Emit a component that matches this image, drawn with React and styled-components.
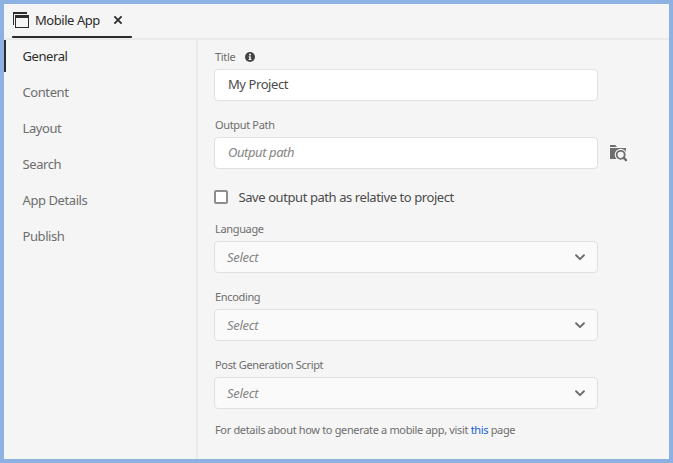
import React from 'react';
import styled, { createGlobalStyle } from 'styled-components';

const GlobalStyle = createGlobalStyle`
  * { box-sizing: border-box; }
  body { margin: 0; }
  button, input { font: inherit; letter-spacing: inherit; }
`;

const Window = styled.div`
  display: flex;
  flex-direction: column;
  width: 673px;
  height: 463px;
  border: 4px solid #8cb1e2;
  background: #f5f5f5;
  font: 13px/18px "Noto Sans", "Open Sans", sans-serif;
  letter-spacing: -0.42px;
  color: #4b4b4b;
  white-space: nowrap;
`;

const TabBar = styled.div`
  flex: none;
  height: 36px;
  padding-left: 8px;
  border-bottom: 2px solid #eaeaea;
`;

const Tab = styled.div`
  display: flex;
  align-items: center;
  width: 120px;
  height: 34px;
  padding: 0 9px 1px 1px;
  border-bottom: 2px solid #2c2c2c;
  border-radius: 1px;
  color: #2c2c2c;
`;

const TabTitle = styled.span`
  margin-left: 6px;
  letter-spacing: -0.45px;
`;

const CloseButton = styled.button`
  display: flex;
  margin-left: auto;
  padding: 0;
  border: 0;
  background: none;
  color: #2c2c2c;
`;

const Body = styled.div`
  display: flex;
  flex: 1;
  min-height: 0;
`;

const Sidebar = styled.nav`
  display: flex;
  flex-direction: column;
  gap: 4px;
  width: 194px;
  border-right: 2px solid #eaeaea;
`;

const NavItem = styled.a`
  height: 32px;
  padding-left: ${p => (p.$active ? 16.5 : 18.5)}px;
  border-left: ${p => (p.$active ? '2px solid #2c2c2c' : '0')};
  line-height: 32px;
  color: ${p => (p.$active ? '#2c2c2c' : '#6e6e6e')};
`;

const Form = styled.form`
  display: flex;
  flex-direction: column;
  padding: 8px 0 0 16px;
`;

const Field = styled.div`
  height: 68px;
`;

const Label = styled.label`
  display: flex;
  align-items: center;
  gap: 10px;
  height: 18px;
  margin-bottom: 3px;
  padding-left: 1px;
  font-size: 11px;
  letter-spacing: -0.34px;
  color: #6e6e6e;
`;

const FieldRow = styled.div`
  display: flex;
  align-items: center;
  gap: 12px;
`;

const TextInput = styled.input`
  width: 384px;
  height: 32px;
  padding: 0 13px 2px;
  border: 1px solid #e0e0e0;
  border-radius: 4px;
  outline: 0;
  background: #fff;
  color: #4b4b4b;
  &::placeholder { color: #858585; font-style: italic; opacity: 1; }
`;

const Picker = styled.button`
  display: flex;
  align-items: center;
  justify-content: space-between;
  width: 384px;
  height: 32px;
  padding: 0 12px;
  border: 1px solid #e0e0e0;
  border-radius: 4px;
  background: #fafafa;
  color: #6e6e6e;
`;

const Placeholder = styled.span`
  font-style: italic;
  letter-spacing: -0.3px;
  color: #858585;
`;

const CheckRow = styled.label`
  display: flex;
  align-items: center;
  gap: 10.5px;
  height: 20px;
  margin: 3px 0 13px;
`;

const CheckBox = styled.span`
  width: 14px;
  height: 14px;
  border: 2px solid #8e8e8e;
  border-radius: 2px;
  background: #fff;
`;

const Note = styled.p`
  margin: -3px 0 0 1px;
  font-size: 11px;
  letter-spacing: -0.34px;
  color: #6e6e6e;
`;

const Link = styled.a`
  color: #0d5fdc;
`;

const WindowsIcon = () => (
  <svg width="16" height="16" viewBox="0 0 16 16" fill="#2c2c2c" shapeRendering="crispEdges">
    <path d="M0 0h14v2H1v11H0z" />
    <path fillRule="evenodd" d="M2 3h14v13H2zM3 6v9h12V6z" />
  </svg>
);

const CrossIcon = () => (
  <svg width="10" height="10" viewBox="0 0 10 10" stroke="currentColor" strokeWidth="1.8">
    <path d="M1.4 1.4 8.6 8.6M8.6 1.4 1.4 8.6" />
  </svg>
);

const InfoIcon = () => (
  <svg width="10" height="10" viewBox="0 0 10 10">
    <circle cx="5" cy="5" r="5" fill="#444" />
    <path d="M4.1 1.8h1.8v1.6H4.1zM3.8 4.3h2v2.8h.7v1H3.6v-1h.6V5.2h-.4z" fill="#f5f5f5" />
  </svg>
);

const ChevronIcon = () => (
  <svg width="10" height="7" viewBox="0 0 10 7" fill="none" stroke="currentColor" strokeWidth="2" strokeLinecap="round" strokeLinejoin="round">
    <path d="M1.1 1.3 5 5.1 8.9 1.3" />
  </svg>
);

const BrowseIcon = () => (
  <svg width="18" height="18" viewBox="0 0 18 18">
    <path d="M0 1h5.2L7 3H0zM0 4h16v11H0z" fill="#6e6e6e" />
    <circle cx="10.7" cy="10.8" r="6" fill="#f5f5f5" />
    <circle cx="10.7" cy="10.8" r="4" fill="#f5f5f5" stroke="#6e6e6e" strokeWidth="1.8" />
    <path d="M13.7 13.8 16 16.2" stroke="#6e6e6e" strokeWidth="2.4" strokeLinecap="round" />
  </svg>
);

const NAV = [
  { name: 'General', active: true },
  { name: 'Content' },
  { name: 'Layout' },
  { name: 'Search' },
  { name: 'App Details' },
  { name: 'Publish' },
];

const SelectField = ({ label }) => (
  <Field>
    <Label>{label}</Label>
    <Picker type="button">
      <Placeholder>Select</Placeholder>
      <ChevronIcon />
    </Picker>
  </Field>
);

export default function App() {
  return (
    <>
      <GlobalStyle />
      <Window>
        <TabBar>
          <Tab>
            <WindowsIcon />
            <TabTitle>Mobile App</TabTitle>
            <CloseButton aria-label="Close"><CrossIcon /></CloseButton>
          </Tab>
        </TabBar>
        <Body>
          <Sidebar>
            {NAV.map(item => (
              <NavItem key={item.name} $active={item.active}>{item.name}</NavItem>
            ))}
          </Sidebar>
          <Form>
            <Field>
              <Label>Title <InfoIcon /></Label>
              <TextInput defaultValue="My Project" />
            </Field>
            <Field>
              <Label>Output Path</Label>
              <FieldRow>
                <TextInput placeholder="Output path" />
                <BrowseIcon />
              </FieldRow>
            </Field>
            <CheckRow>
              <CheckBox />
              Save output path as relative to project
            </CheckRow>
            <SelectField label="Language" />
            <SelectField label="Encoding" />
            <SelectField label="Post Generation Script" />
            <Note>
              For details about how to generate a mobile app, visit <Link>this</Link> page
            </Note>
          </Form>
        </Body>
      </Window>
    </>
  );
}
